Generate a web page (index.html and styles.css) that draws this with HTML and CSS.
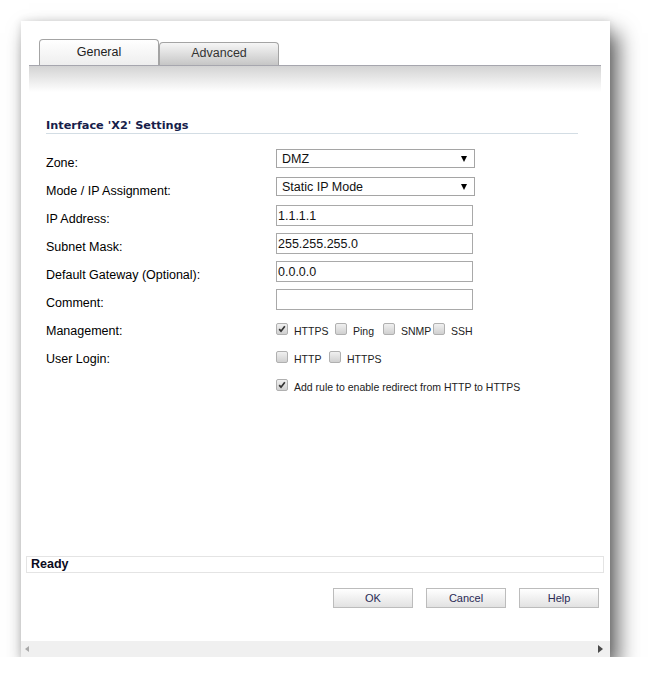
FILE: index.html
```html
<!DOCTYPE html>
<html>
<head>
    <title>Interface Settings</title>
    <meta http-equiv="content-type" content="text/html; charset=UTF-8"/>
    <link rel="stylesheet" href="styles.css">
</head>
<body>
    <div class="dlg">
        <div class="tabbar">
            <div class="tab tab_on">General</div>
            <div class="tab">Advanced</div>
        </div>
        <div class="tab_shade"></div>
        <div class="dlg_body">
            <h3 class="sec_title">Interface 'X2' Settings</h3>
            <div class="form_rows">
                <div class="row">
                    <label>Zone:</label>
                    <div class="sel"><span>DMZ</span><i class="caret"></i></div>
                </div>
                <div class="row">
                    <label>Mode / IP Assignment:</label>
                    <div class="sel"><span>Static IP Mode</span><i class="caret"></i></div>
                </div>
                <div class="row">
                    <label>IP Address:</label>
                    <input class="txt" type="text" value="1.1.1.1">
                </div>
                <div class="row">
                    <label>Subnet Mask:</label>
                    <input class="txt" type="text" value="255.255.255.0">
                </div>
                <div class="row">
                    <label>Default Gateway (Optional):</label>
                    <input class="txt" type="text" value="0.0.0.0">
                </div>
                <div class="row">
                    <label>Comment:</label>
                    <input class="txt" type="text" value="">
                </div>
                <div class="row">
                    <label>Management:</label>
                    <div class="checks">
                        <span class="opt w59"><i class="cb on"><svg viewBox="0 0 12 12"><path d="M2.6 6.2 L4.8 8.6 L9.4 2.6"/></svg></i>HTTPS</span>
                        <span class="opt w48"><i class="cb"></i>Ping</span>
                        <span class="opt w50"><i class="cb"></i>SNMP</span>
                        <span class="opt"><i class="cb"></i>SSH</span>
                    </div>
                </div>
                <div class="row">
                    <label>User Login:</label>
                    <div class="checks">
                        <span class="opt w53"><i class="cb"></i>HTTP</span>
                        <span class="opt"><i class="cb"></i>HTTPS</span>
                    </div>
                </div>
                <div class="row">
                    <label></label>
                    <div class="checks">
                        <span class="opt"><i class="cb on"><svg viewBox="0 0 12 12"><path d="M2.6 6.2 L4.8 8.6 L9.4 2.6"/></svg></i>Add rule to enable redirect from HTTP to HTTPS</span>
                    </div>
                </div>
            </div>
        </div>
        <div class="status">Ready</div>
        <div class="btns">
            <button>OK</button>
            <button>Cancel</button>
            <button>Help</button>
        </div>
        <div class="hscroll">
            <i class="arr_l"></i>
            <i class="arr_r"></i>
        </div>
    </div>
</body>
</html>
```

FILE: styles.css
```css
html, body{
    margin: 0;
    padding: 0;
    background-color: #fff;
}
body{
    font-family: "Liberation Sans", Arial, sans-serif;
    font-size: 12.5px;
    color: #000;
}
.dlg{
    margin: 21px 0 0 21px;
    width: 589px;
    height: 636px;
    background-color: #fff;
    display: flex;
    flex-direction: column;
    box-shadow: 8px 12px 20px rgba(0,0,0,0.62), 0 0 8px rgba(0,0,0,0.12);
}
/* tabs */
.tabbar{
    display: flex;
    align-items: flex-end;
    height: 26px;
    margin: 18px 9px 0 8px;
    padding-left: 10px;
    border-bottom: 1px solid #a6a6ae;
}
.tab{
    box-sizing: border-box;
    width: 120px;
    height: 23px;
    border: 1px solid #a4a4a4;
    border-bottom: none;
    border-radius: 4px 4px 0 0;
    background: linear-gradient(#f6f6f6, #c6c6c6);
    text-align: center;
    line-height: 21px;
    font-size: 12.5px;
    color: #333;
}
.tab_on{
    height: 26px;
    line-height: 24px;
    background: linear-gradient(#ffffff, #eeeeee);
    color: #222;
}
.tab_shade{
    height: 26px;
    margin: 0 9px 0 8px;
    background: linear-gradient(#d3d3d3, #ffffff);
}
/* body */
.dlg_body{
    flex: 1;
    padding: 0 32px 0 25px;
}
.sec_title{
    margin: 27px 0 0 0;
    font-family: "DejaVu Sans", Verdana, sans-serif;
    font-size: 11.3px;
    font-weight: bold;
    line-height: 14px;
    color: #16204a;
    border-bottom: 1px solid #d3dde4;
}
.form_rows{
    margin-top: 15px;
}
.row{
    display: grid;
    grid-template-columns: 230px 1fr;
    height: 28px;
}
.row>label{
    padding-top: 7px;
    line-height: 15px;
}
.sel{
    box-sizing: border-box;
    width: 199px;
    height: 19px;
    border: 1px solid #a5a5a5;
    display: flex;
    align-items: center;
    justify-content: space-between;
    padding: 0 7px 0 5px;
    color: #111;
}
.caret{
    width: 0;
    height: 0;
    border-left: 3px solid transparent;
    border-right: 3px solid transparent;
    border-top: 6px solid #000;
}
.txt{
    box-sizing: border-box;
    width: 197px;
    height: 21px;
    margin: 0;
    padding: 0 1px;
    border: 1px solid #a9a9a9;
    font-family: "Liberation Sans", Arial, sans-serif;
    font-size: 12.5px;
    color: #111;
    outline: none;
}
/* checkboxes */
.checks{
    display: flex;
    padding-top: 6px;
}
.opt{
    display: flex;
    align-items: flex-start;
    padding-top: 2px;
    font-size: 10.5px;
    line-height: 12px;
    color: #222;
    white-space: nowrap;
}
.w59{width: 59px;}
.w48{width: 48px;}
.w50{width: 50px;}
.w53{width: 53px;}
.cb{
    box-sizing: border-box;
    width: 12px;
    height: 12px;
    margin-right: 6px;
    margin-top: -2px;
    border: 1px solid #b0b0b0;
    border-radius: 2px;
    background: linear-gradient(#f0f0f0, #d0d0d0);
}
.cb svg{
    display: block;
    width: 10px;
    height: 10px;
}
.cb svg path{
    fill: none;
    stroke: #333;
    stroke-width: 2;
}
/* footer */
.status{
    margin: 0 6px 0 5px;
    height: 17px;
    box-sizing: border-box;
    border: 1px solid #e4e4e4;
    padding-left: 4px;
    font-weight: bold;
    line-height: 15px;
    color: #0a0a20;
}
.btns{
    display: flex;
    justify-content: flex-end;
    gap: 13px;
    margin: 15px 11px 33px 0;
}
.btns button{
    width: 80px;
    height: 20px;
    margin: 0;
    padding: 0;
    border: 1px solid #bcbcbc;
    background: linear-gradient(#ffffff, #e2e2e2);
    font-family: "Liberation Sans", Arial, sans-serif;
    font-size: 11px;
    color: #2a2a55;
}
.hscroll{
    margin-top: auto;
    height: 16px;
    flex-shrink: 0;
    background-color: #f0f0f0;
    display: flex;
    align-items: center;
    justify-content: space-between;
    padding: 0 7px 0 4px;
}
.arr_l{
    width: 0;
    height: 0;
    border-top: 3px solid transparent;
    border-bottom: 3px solid transparent;
    border-right: 4px solid #a8a8a8;
}
.arr_r{
    width: 0;
    height: 0;
    border-top: 4px solid transparent;
    border-bottom: 4px solid transparent;
    border-left: 5px solid #4a4a4a;
}
```
